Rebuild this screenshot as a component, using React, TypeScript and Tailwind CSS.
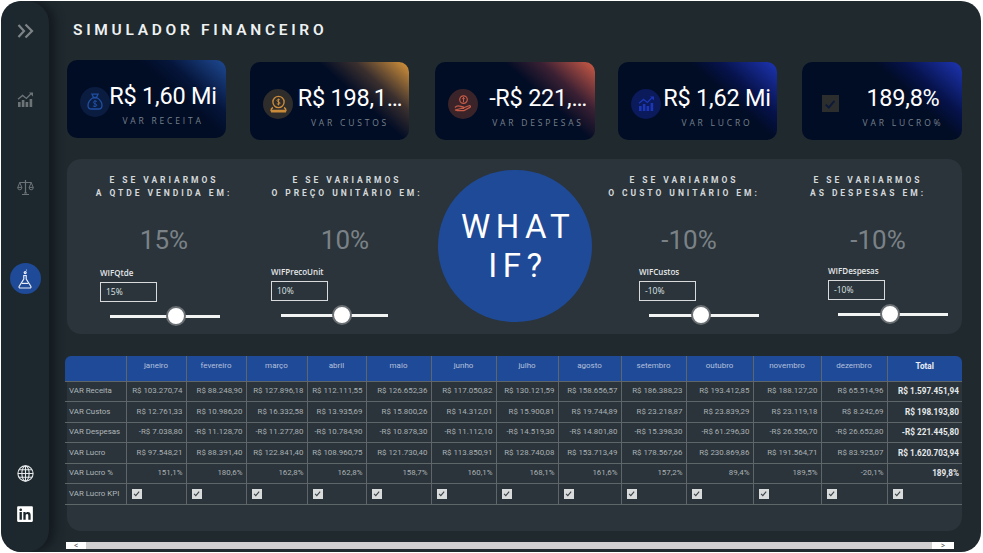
import React from "react";
import { FaLinkedin } from "react-icons/fa";

const Bag = ({ c }: { c: string }) => (
  <svg width="16" height="17" viewBox="0 0 16 17" fill="none" stroke={c} strokeWidth="1.3">
    <path d="M5 1.2h6l-1.6 3.3H6.6z" />
    <path d="M6 4.8C3 6.6 1 9.600 1 12.4c0 2.4 1.600 3.600 3.600 3.600h6.800c2 0 3.600-1.200 3.600-3.600 0-2.800-2-5.800-5-7.600z" />
    <path d="M10 8.600c-.5-.7-3.600-1-3.600.8s3.400 1 3.400 2.800-3.200 1.600-3.800.6M8 7v7" strokeWidth="1" />
  </svg>
);

const CoinBase = ({ c }: { c: string }) => (
  <svg width="17" height="18" viewBox="0 0 17 18" fill="none" stroke={c} strokeWidth="1.4">
    <circle cx="8.5" cy="7" r="5.6" />
    <path d="M10 5c-.6-.8-3-.9-3 .6s3 .9 3 2.500-2.600 1.300-3.200.5M8.500 3.600v6.800" strokeWidth="1" />
    <path d="M3 12.500c-1.400.6-2 1.600-2 3h15c0-1.400-.6-2.400-2-3M1 16.800h15" />
  </svg>
);

const HandCoin = ({ c }: { c: string }) => (
  <svg width="18" height="17" viewBox="0 0 18 17" fill="none" stroke={c} strokeWidth="1.2">
    <circle cx="9.5" cy="4.6" r="3.8" />
    <path d="M9.500 2v5.200M8.200 3.600h2.600" strokeWidth="1" />
    <path d="M1 12.500c1.600-1.800 3.400-2 5-1.300l3 .7c1.200.3 1 1.700-.2 1.600l-2.400-.2M9 13l6-2.200c1.400-.4 2 .9.900 1.600L10 15.600H3.400L1 15z" />
  </svg>
);

const ChartIcon = ({ c, w = 17 }: { c: string; w?: number }) => (
  <svg width={w} height={w} viewBox="0 0 17 17" fill={c}>
    <rect x="1" y="11" width="2.6" height="5" />
    <rect x="4.8" y="9" width="2.6" height="7" />
    <rect x="8.6" y="11" width="2.6" height="5" />
    <rect x="12.6" y="8" width="2.6" height="8" />
    <path d="M1 8.200 5.600 4.400 9.400 7.400 14 2.800" fill="none" stroke={c} strokeWidth="1.3" />
    <path d="M12 1.400h4v4z" />
  </svg>
);

const ScaleIcon = () => (
  <svg width="17" height="17" viewBox="0 0 17 17" fill="none" stroke="#6d7478" strokeWidth="1">
    <path d="M8.500 1v13M2.500 3.500h12M5 15.500h7M7 14h3" strokeWidth="1.2" />
    <path d="M2.800 3.500.8 8.400M2.800 3.500l2 4.900M14.200 3.500l-2 4.900M14.200 3.500l2 4.900" />
    <path d="M.7 8.400h4.200a2.100 2.400 0 0 1-4.200 0zM12.100 8.400h4.200a2.100 2.400 0 0 1-4.200 0z" />
  </svg>
);

const FlaskIcon = () => (
  <svg width="14" height="20" viewBox="0 0 14 20" fill="none" stroke="#e8edf5" strokeWidth="1.2">
    <path d="M5.200 6.500h3.600M5.800 6.500v3.600L1.200 17.200c-.5.900 0 1.800 1 1.800h9.600c1 0 1.500-.9 1-1.800L8.200 10.100V6.500" />
    <circle cx="7.2" cy="3.6" r="1" />
    <circle cx="8.4" cy="1" r=".6" fill="#e8edf5" stroke="none" />
    <path d="M3.600 14.400h6.800" />
  </svg>
);

const GlobeIcon = () => (
  <svg width="17" height="17" viewBox="0 0 17 17" fill="none" stroke="#e4e8ea" strokeWidth="1.1">
    <circle cx="8.5" cy="8.5" r="7.6" />
    <ellipse cx="8.5" cy="8.5" rx="3.6" ry="7.6" />
    <path d="M8.500 1v15M1 8.500h15M2 4.800h13M2 12.200h13" />
  </svg>
);

const Check = ({ s = 10, bg = "#dadcdc", c = "#3a4348" }: { s?: number; bg?: string; c?: string }) => (
  <span className="inline-flex items-center justify-center" style={{ width: s, height: s, background: bg }}>
    <svg width={s * 0.7} height={s * 0.7} viewBox="0 0 10 10" fill="none" stroke={c} strokeWidth="1.6">
      <path d="M1.500 5.600 4 8l4.800-5.600" />
    </svg>
  </span>
);

const Card = ({
  value,
  label,
  grad,
  circle,
  icon,
  className,
  valueClass,
}: {
  value: string;
  label: string;
  grad: string;
  circle?: string;
  icon: React.ReactNode;
  className: string;
  valueClass: string;
}) => (
  <div className={`flex h-[78px] shrink-0 items-center rounded-[10px] pl-[13px] ${grad} ${className}`}>
    <div
      className="mt-[5px] flex h-[30px] w-[30px] shrink-0 items-center justify-center rounded-full"
      style={circle ? { background: circle } : undefined}
    >
      {icon}
    </div>
    <div className={`flex flex-col items-center pt-[10px] ${valueClass}`}>
      <div className="whitespace-nowrap font-[Roboto,sans-serif] text-[23.5px] leading-[30px] tracking-[-0.25px] text-white">{value}</div>
      <div className="mt-[4px] whitespace-nowrap font-['Open_Sans',sans-serif] text-[8.5px] leading-[12px] tracking-[2.8px] text-[#76818c]">{label}</div>
    </div>
  </div>
);

const Slicer = ({ name, val, thumb, width = 110 }: { name: string; val: string; thumb: number; width?: number }) => (
  <div>
    <div className="font-['Open_Sans',sans-serif] text-[8px] font-semibold leading-[12px] text-[#e4e6e8]">{name}</div>
    <div className="mt-[3px] flex h-[20px] w-[57px] items-center border border-[#d8dadb] pl-[5px] font-['Open_Sans',sans-serif] text-[8.5px] text-[#dfe3e6]">{val}</div>
    <div className="relative ml-[10px] mt-[13px] h-[3px] bg-[#f2f3f3]" style={{ width }}>
      <div
        className="absolute top-[-9px] h-[20px] w-[20px] rounded-full border-2 border-[#6a6f73] bg-white"
        style={{ left: thumb - 10 }}
      />
    </div>
  </div>
);

const Col = ({
  l1,
  l2,
  value,
  width,
  valueClass,
  slicerClass,
  children,
}: {
  l1: string;
  l2: string;
  value: string;
  width: string;
  valueClass: string;
  slicerClass: string;
  children: React.ReactNode;
}) => (
  <div className={`flex shrink-0 flex-col pt-[15px] ${width}`}>
    <div className="text-center font-[Roboto,sans-serif] text-[8.5px] font-bold leading-[12.5px] tracking-[2.95px] text-[#d4d8da]">
      <div>{l1}</div>
      <div>{l2}</div>
    </div>
    <div className={`mt-[26px] text-center font-[Roboto,sans-serif] text-[26px] leading-[30px] text-[#7b8287] ${valueClass}`}>{value}</div>
    <div className={slicerClass}>{children}</div>
  </div>
);

const months = ["janeiro", "fevereiro", "março", "abril", "maio", "junho", "julho", "agosto", "setembro", "outubro", "novembro", "dezembro"];
const rows: [string, string[], string][] = [
  ["VAR Receita", ["R$ 103.270,74", "R$ 88.248,90", "R$ 127.896,18", "R$ 112.111,55", "R$ 126.652,36", "R$ 117.050,82", "R$ 130.121,59", "R$ 158.656,57", "R$ 186.388,23", "R$ 193.412,85", "R$ 188.127,20", "R$ 65.514,96"], "R$ 1.597.451,94"],
  ["VAR Custos", ["R$ 12.761,33", "R$ 10.986,20", "R$ 16.332,58", "R$ 13.935,69", "R$ 15.800,26", "R$ 14.312,01", "R$ 15.900,81", "R$ 19.744,89", "R$ 23.218,87", "R$ 23.839,29", "R$ 23.119,18", "R$ 8.242,69"], "R$ 198.193,80"],
  ["VAR Despesas", ["-R$ 7.038,80", "-R$ 11.128,70", "-R$ 11.277,80", "-R$ 10.784,90", "-R$ 10.878,30", "-R$ 11.112,10", "-R$ 14.519,30", "-R$ 14.801,80", "-R$ 15.398,30", "-R$ 61.296,30", "-R$ 26.556,70", "-R$ 26.652,80"], "-R$ 221.445,80"],
  ["VAR Lucro", ["R$ 97.548,21", "R$ 88.391,40", "R$ 122.841,40", "R$ 108.960,75", "R$ 121.730,40", "R$ 113.850,91", "R$ 128.740,08", "R$ 153.713,49", "R$ 178.567,66", "R$ 230.869,86", "R$ 191.564,71", "R$ 83.925,07"], "R$ 1.620.703,94"],
  ["VAR Lucro %", ["151,1%", "180,6%", "162,8%", "162,8%", "158,7%", "160,1%", "168,1%", "161,6%", "157,2%", "89,4%", "189,5%", "-20,1%"], "189,8%"],
];
const widths = [61, 60, 60, 61, 59, 65, 65, 62, 63, 65, 67, 68, 66, 75];

export default function App() {
  return (
    <div className="h-[553px] w-[983px] overflow-hidden bg-white pl-[1px] pt-[1px]">
      <div className="flex h-[551px] w-[980px] overflow-hidden rounded-[20px] bg-[#1f292e]">
        <aside className="z-10 flex h-full w-[48px] shrink-0 flex-col items-center rounded-[22px] bg-[#1d282e] pt-[22px] shadow-[6px_0_10px_#141b20]">
          <svg width="17" height="16" viewBox="0 0 17 16" fill="none" stroke="#7d8488" strokeWidth="2.2">
            <path d="M1.500 2 7 8l-5.500 6M8.500 1.500 15 8l-6.500 6.500" />
          </svg>
          <div className="mt-[52px]">
            <ChartIcon c="#6d7478" />
          </div>
          <div className="mt-[71px]">
            <ScaleIcon />
          </div>
          <div className="mt-[67px] flex h-[31px] w-[31px] items-center justify-center rounded-full bg-[#1f4a98]">
            <FlaskIcon />
          </div>
          <div className="mt-[171px]">
            <GlobeIcon />
          </div>
          <FaLinkedin className="mt-[23px] text-[18px] text-white" />
        </aside>

        <main className="min-w-0 flex-1 pl-[18px]">
          <h1 className="ml-[6px] mt-[19px] whitespace-nowrap font-[Roboto,sans-serif] text-[15.5px] font-semibold leading-[20px] tracking-[3.7px] text-[#eef1f2]">
            SIMULADOR FINANCEIRO
          </h1>

          <div className="mt-[20px] flex h-[80px] items-start">
            <Card
              className="w-[159px]"
              grad="bg-[linear-gradient(222deg,#1f4a94_0%,#05153a_24%,#010c25_36%)]"
              circle="#0b1c41"
              icon={<Bag c="#1f4fa3" />}
              value="R$ 1,60 Mi"
              label="VAR RECEITA"
              valueClass="-ml-[2px] w-[110px]"
            />
            <Card
              className="ml-[24px] mt-[2px] w-[159px]"
              grad="bg-[linear-gradient(222deg,#d9963a_0%,#3a2f2e_22%,#010c25_37%)]"
              circle="#2f2c2c"
              icon={<CoinBase c="#c98a3a" />}
              value="R$ 198,1…"
              label="VAR CUSTOS"
              valueClass="ml-[1px] w-[112px]"
            />
            <Card
              className="ml-[26px] mt-[2px] w-[160px]"
              grad="bg-[linear-gradient(222deg,#cf5c46_0%,#3b2033_22%,#010c25_37%)]"
              circle="#3a2429"
              icon={<HandCoin c="#c55a46" />}
              value="-R$ 221,…"
              label="VAR DESPESAS"
              valueClass="ml-[7px] w-[106px]"
            />
            <Card
              className="ml-[23px] mt-[2px] w-[159px]"
              grad="bg-[linear-gradient(222deg,#1e35b4_0%,#06124a_24%,#010c25_36%)]"
              circle="#0a1a5a"
              icon={<ChartIcon c="#1c36b6" />}
              value="R$ 1,62 Mi"
              label="VAR LUCRO"
              valueClass="ml-[1px] w-[110px]"
            />
            <Card
              className="ml-[25px] mt-[2px] w-[160px]"
              grad="bg-[linear-gradient(222deg,#1e35b4_0%,#06124a_24%,#010c25_36%)]"
              icon={<Check s={17} bg="#2c2d2d" c="#0b1a3a" />}
              value="189,8%"
              label="VAR LUCRO%"
              valueClass="ml-[6px] w-[104px]"
            />
          </div>

          <section className="mt-[19px] flex h-[175px] w-[895px] rounded-[14px] bg-[#2a343a]">
            <Col l1="E SE VARIARMOS" l2="A QTDE VENDIDA EM:" value="15%" width="w-[194px]" valueClass="" slicerClass="ml-[33px] mt-[12px]">
              <Slicer name="WIFQtde" val="15%" thumb={66} />
            </Col>
            <Col l1="E SE VARIARMOS" l2="O PREÇO UNITÁRIO EM:" value="10%" width="w-[172px]" valueClass="pr-[4px]" slicerClass="ml-[10px] mt-[11px]">
              <Slicer name="WIFPrecoUnit" val="10%" thumb={61} width={107} />
            </Col>
            <div className="ml-[5px] mt-[11px] flex h-[152px] w-[154px] shrink-0 flex-col items-center justify-center rounded-full bg-[#1f4a98] pl-[6px] font-[Roboto,sans-serif] text-[33px] leading-[39px] tracking-[5.5px] text-white">
              <div>WHAT</div>
              <div>IF?</div>
            </div>
            <Col l1="E SE VARIARMOS" l2="O CUSTO UNITÁRIO EM:" value="-10%" width="w-[184px]" valueClass="pl-[10px]" slicerClass="ml-[47px] mt-[11px]">
              <Slicer name="WIFCustos" val="-10%" thumb={52} />
            </Col>
            <Col l1="E SE VARIARMOS" l2="AS DESPESAS EM:" value="-10%" width="w-[184px]" valueClass="pl-[20px]" slicerClass="ml-[52px] mt-[10px]">
              <Slicer name="WIFDespesas" val="-10%" thumb={52} />
            </Col>
          </section>

          <section className="mt-[22px] h-[175px] w-[895px] rounded-[14px] bg-[#2a343a]">
            <table className="-ml-[2px] w-[897px] table-fixed border-collapse font-[Roboto,sans-serif] text-[7.9px]">
              <colgroup>
                {widths.map((w, i) => (
                  <col key={i} style={{ width: w }} />
                ))}
              </colgroup>
              <thead>
                <tr className="h-[25px] bg-[#1f4a98]">
                  <th className="rounded-tl-[6px] border-r border-b border-[#5f666a]" />
                  {months.map((m) => (
                    <th key={m} className="border-x border-b border-[#5f666a] pb-[5px] text-[8px] font-normal text-[#b4c0dc]">{m}</th>
                  ))}
                  <th className="rounded-tr-[6px] border-b border-[#5f666a] pb-[5px] text-[8.2px] font-bold text-[#e8edf5]">Total</th>
                </tr>
              </thead>
              <tbody>
                {rows.map(([n, vals, total]) => (
                  <tr key={n} className="h-[20.5px] border-b border-[#5f666a]">
                    <td className="border-r border-[#5f666a] pl-[4px] whitespace-nowrap text-[#b0b7bb]">{n}</td>
                    {vals.map((v, i) => (
                      <td key={i} className="border-x border-[#5f666a] pr-[3px] text-right whitespace-nowrap text-[#aab1b5]">{v}</td>
                    ))}
                    <td className="pr-[3px] text-right text-[8.2px] font-bold whitespace-nowrap text-[#e6e9eb]">{total}</td>
                  </tr>
                ))}
                <tr className="h-[21px] border-b border-[#5f666a]">
                  <td className="border-r border-[#5f666a] pl-[4px] whitespace-nowrap text-[#b0b7bb]">VAR Lucro KPI</td>
                  {months.map((m) => (
                    <td key={m} className="border-x border-[#5f666a] pl-[5px] leading-none">
                      <Check />
                    </td>
                  ))}
                  <td className="pl-[5px] leading-none">
                    <Check />
                  </td>
                </tr>
              </tbody>
            </table>
          </section>

          <div className="-ml-[1px] mt-[11px] flex h-[7px] w-[888px] items-center justify-between bg-[#d0d0d0] text-[7px] leading-none text-[#444]">
            <div className="flex h-full w-[20px] items-center justify-center bg-white">&lt;</div>
            <div className="flex h-full w-[22px] items-center justify-center bg-white">&gt;</div>
          </div>
        </main>
      </div>
    </div>
  );
}
